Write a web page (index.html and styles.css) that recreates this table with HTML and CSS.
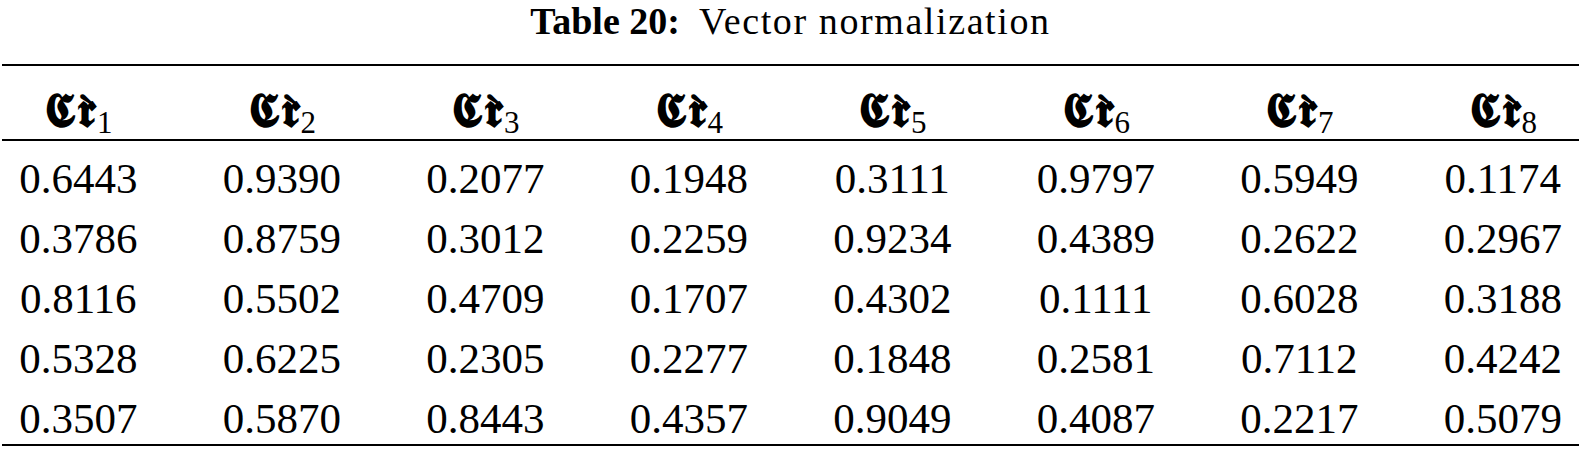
FILE: index.html
```html
<!DOCTYPE html>
<html>
<head>
<meta charset="utf-8">
<link rel="stylesheet" href="styles.css">
</head>
<body>
<div class="page">
  <div class="caption"><span class="label">Table 20:</span>&nbsp; <span class="title">Vector normalization</span></div>
  <table class="data">
    <thead>
      <tr>
        <th><span class="fk">𝕮𝖗̀</span><sub>1</sub></th>
        <th><span class="fk">𝕮𝖗̀</span><sub>2</sub></th>
        <th><span class="fk">𝕮𝖗̀</span><sub>3</sub></th>
        <th><span class="fk">𝕮𝖗̀</span><sub>4</sub></th>
        <th><span class="fk">𝕮𝖗̀</span><sub>5</sub></th>
        <th><span class="fk">𝕮𝖗̀</span><sub>6</sub></th>
        <th><span class="fk">𝕮𝖗̀</span><sub>7</sub></th>
        <th><span class="fk">𝕮𝖗̀</span><sub>8</sub></th>
      </tr>
    </thead>
    <tbody>
      <tr><td>0.6443</td><td>0.9390</td><td>0.2077</td><td>0.1948</td><td>0.3111</td><td>0.9797</td><td>0.5949</td><td>0.1174</td></tr>
      <tr><td>0.3786</td><td>0.8759</td><td>0.3012</td><td>0.2259</td><td>0.9234</td><td>0.4389</td><td>0.2622</td><td>0.2967</td></tr>
      <tr><td>0.8116</td><td>0.5502</td><td>0.4709</td><td>0.1707</td><td>0.4302</td><td>0.1111</td><td>0.6028</td><td>0.3188</td></tr>
      <tr><td>0.5328</td><td>0.6225</td><td>0.2305</td><td>0.2277</td><td>0.1848</td><td>0.2581</td><td>0.7112</td><td>0.4242</td></tr>
      <tr><td>0.3507</td><td>0.5870</td><td>0.8443</td><td>0.4357</td><td>0.9049</td><td>0.4087</td><td>0.2217</td><td>0.5079</td></tr>
    </tbody>
  </table>
</div>
</body>
</html>
```
FILE: styles.css
```css
html, body {
  margin: 0;
  padding: 0;
  background: #fff;
}
body {
  font-family: "Liberation Serif", "DejaVu Serif", serif;
  color: #000;
}
.page {
  padding: 0 3px 0 2px;
}
.caption {
  font-size: 38px;
  line-height: 42px;
  padding-top: 0;
  text-align: center;
  margin-bottom: 22px;
}
.label {
  font-weight: bold;
}
.title {
  letter-spacing: 1.6px;
}
.data {
  border-collapse: separate;
  border-spacing: 0;
  border-top: 2px solid #000;
  border-bottom: 2px solid #000;
  font-family: "Liberation Serif", "DejaVu Serif", serif;
  font-size: 43px;
}
.data th, .data td {
  width: 118.5px;
  padding: 0 42.5px;
  text-align: center;
  white-space: nowrap;
  font-family: "Liberation Serif", "DejaVu Serif", serif;
}
.data th:first-child, .data td:first-child {
  padding-left: 17px;
}
.data th:last-child, .data td:last-child {
  padding-right: 17px;
}
.data th {
  border-bottom: 2px solid #000;
  font-weight: normal;
  padding-top: 1px;
  padding-bottom: 0;
  line-height: 72px;
  vertical-align: top;
}
.fk {
  font-family: "DejaVu Serif", "DejaVu Sans", serif;
  font-size: 48px;
  font-weight: bold;
  letter-spacing: 1px;
  line-height: 0;
  vertical-align: -10px;
}
.data th sub {
  font-family: "Liberation Serif", serif;
  font-size: 31px;
  vertical-align: -16px;
  line-height: 0;
}
.data td {
  line-height: 50px;
  padding-top: 5px;
  padding-bottom: 5px;
}
.data tbody tr:first-child td {
  padding-top: 13px;
}
.data tbody tr:last-child td {
  padding-bottom: 0;
}
```
